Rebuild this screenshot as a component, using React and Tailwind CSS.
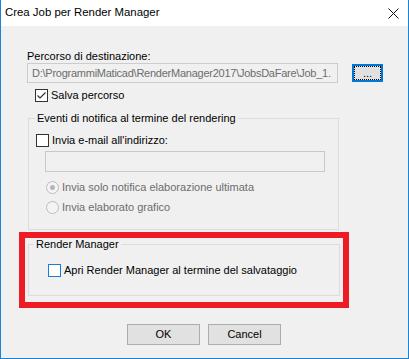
import React from "react";

const font = { fontFamily: '"Liberation Sans", Arial, sans-serif' };

function CheckBox({ checked, focus }) {
  return (
    <div
      className={`w-[13px] h-[13px] shrink-0 bg-white border ${
        focus ? "border-[#1a7fd4]" : "border-[#333333]"
      } flex items-center justify-center`}
    >
      {checked && (
        <svg width="11" height="11" viewBox="0 0 11 11">
          <polyline points="1.5,5.5 4,8 9.5,2.5" fill="none" stroke="#333" strokeWidth="1.2" />
        </svg>
      )}
    </div>
  );
}

function Radio({ selected }) {
  return (
    <div className="w-[13px] h-[13px] shrink-0 rounded-full border border-[#bcbcbc] bg-[#f4f4f4] flex items-center justify-center">
      {selected && <div className="w-[5px] h-[5px] rounded-full bg-[#b4b4b4]" />}
    </div>
  );
}

export default function App() {
  return (
    <div
      className="w-[409px] h-[359px] bg-white border-x border-b border-[#1883d7] flex flex-col text-[11px] text-black"
      style={font}
    >
      {/* title bar */}
      <div className="h-[26px] shrink-0 bg-white flex items-center justify-between">
        <span className="pl-[4px] text-[11.4px]">Crea Job per Render Manager</span>
        <svg width="11" height="11" viewBox="0 0 11 11" className="mr-[9px]">
          <path d="M0.5 0.5 L10.5 10.5 M10.5 0.5 L0.5 10.5" stroke="#111" strokeWidth="1" />
        </svg>
      </div>

      {/* body */}
      <div className="flex-1 bg-[#f0f0f0] flex flex-col">
        <div className="mt-[23px] ml-[26px] h-[14px] leading-[14px]">Percorso di destinazione:</div>

        <div className="flex items-start">
          <div className="ml-[26px] w-[311px] h-[20px] border border-[#cccccc] bg-[#f0f0f0] text-[#6d6d6d] pl-[4px] leading-[18px] tracking-[-0.25px] whitespace-nowrap overflow-hidden">
            D:\ProgrammiMaticad\RenderManager2017\JobsDaFare\Job_1.
          </div>
          <button className="ml-[14px] mt-[1px] w-[31px] h-[18px] border-2 border-[#0078d7] bg-[#e1e1e1] p-0">
            <div className="w-full h-full border border-dotted border-black flex items-end justify-center leading-[12px]">
              ...
            </div>
          </button>
        </div>

        <div className="mt-[6px] ml-[34px] h-[13px] flex items-center">
          <CheckBox checked />
          <span className="ml-[3px]">Salva percorso</span>
        </div>

        <fieldset className="mt-[9px] ml-[27px] w-[311px] h-[119px] border border-[#dcdcdc] flex flex-col">
          <legend className="ml-[6px] px-[2px] leading-[14px]">Eventi di notifica al termine del rendering</legend>
          <div className="mt-[9px] ml-[7px] h-[13px] flex items-center">
            <CheckBox />
            <span className="ml-[3px]">Invia e-mail all'indirizzo:</span>
          </div>
          <div className="mt-[4px] ml-[16px] w-[280px] h-[21px] border border-[#c8c8c8] bg-[#f0f0f0]" />
          <div className="mt-[9px] ml-[17px] h-[13px] flex items-center text-[#6d6d6d]">
            <Radio selected />
            <span className="ml-[3px]">Invia solo notifica elaborazione ultimata</span>
          </div>
          <div className="mt-[7px] ml-[17px] h-[13px] flex items-center text-[#6d6d6d]">
            <Radio />
            <span className="ml-[3px]">Invia elaborato grafico</span>
          </div>
        </fieldset>

        <div className="mt-[2px] ml-[18px] w-[330px] h-[76px] border-[6px] border-[#ed1c24]">
          <fieldset className="ml-[3px] w-[312px] h-[58px] border border-[#dcdcdc] flex flex-col">
            <legend className="ml-[5px] px-[2px] leading-[12px]">Render Manager</legend>
            <div className="mt-[14px] ml-[19px] h-[13px] flex items-center">
              <CheckBox focus />
              <span className="ml-[3px]">Apri Render Manager al termine del salvataggio</span>
            </div>
          </fieldset>
        </div>

        <div className="mt-[16px] ml-[126px] flex gap-[8px]">
          <button className="w-[73px] h-[21px] border border-[#adadad] bg-[#e1e1e1]">OK</button>
          <button className="w-[73px] h-[21px] border border-[#adadad] bg-[#e1e1e1]">Cancel</button>
        </div>
      </div>
    </div>
  );
}
